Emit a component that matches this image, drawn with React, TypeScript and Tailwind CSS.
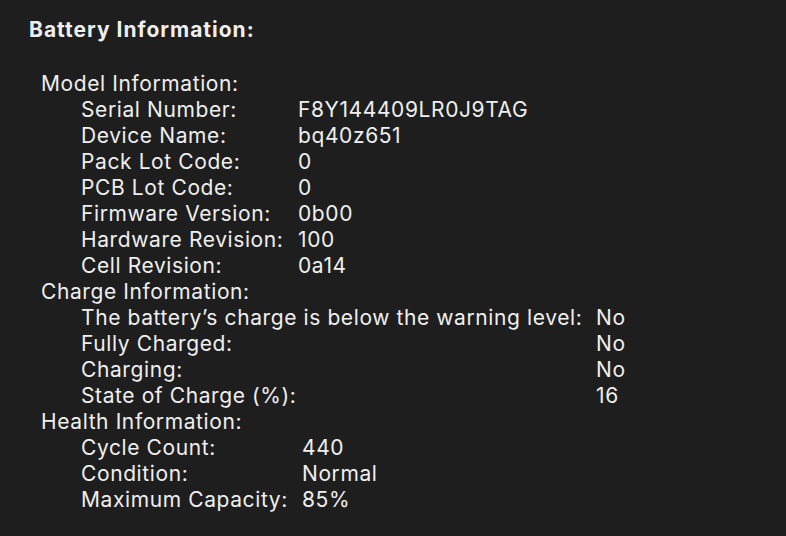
type Row = [string, string];

const model: Row[] = [
  ["Serial Number:", "F8Y144409LR0J9TAG"],
  ["Device Name:", "bq40z651"],
  ["Pack Lot Code:", "0"],
  ["PCB Lot Code:", "0"],
  ["Firmware Version:", "0b00"],
  ["Hardware Revision:", "100"],
  ["Cell Revision:", "0a14"],
];

const charge: Row[] = [
  ["The battery\u2019s charge is below the warning level:", "No"],
  ["Fully Charged:", "No"],
  ["Charging:", "No"],
  ["State of Charge (%):", "16"],
];

const health: Row[] = [
  ["Cycle Count:", "440"],
  ["Condition:", "Normal"],
  ["Maximum Capacity:", "85%"],
];

function Section({ title, rows, labelWidth }: { title: string; rows: Row[]; labelWidth: string }) {
  return (
    <div>
      <div className="pl-[41px]">{title}</div>
      {rows.map(([label, value]) => (
        <div key={label} className="flex pl-[81px]">
          <span className={`${labelWidth} shrink-0 whitespace-nowrap`}>{label}</span>
          <span>{value}</span>
        </div>
      ))}
    </div>
  );
}

export default function App() {
  return (
    <div
      className="w-[786px] h-[536px] overflow-hidden bg-[#1e1e1e] text-[#efefef] text-[21px] leading-[26px] tracking-[0.6px] pt-[17px]"
      style={{ fontFamily: "Inter, 'Liberation Sans', sans-serif" }}
    >
      <div className="pl-[29px] font-bold tracking-[1px]">Battery Information:</div>
      <div className="mt-[28px]">
        <Section title="Model Information:" rows={model} labelWidth="w-[217px]" />
        <Section title="Charge Information:" rows={charge} labelWidth="w-[515px]" />
        <Section title="Health Information:" rows={health} labelWidth="w-[221px]" />
      </div>
    </div>
  );
}
